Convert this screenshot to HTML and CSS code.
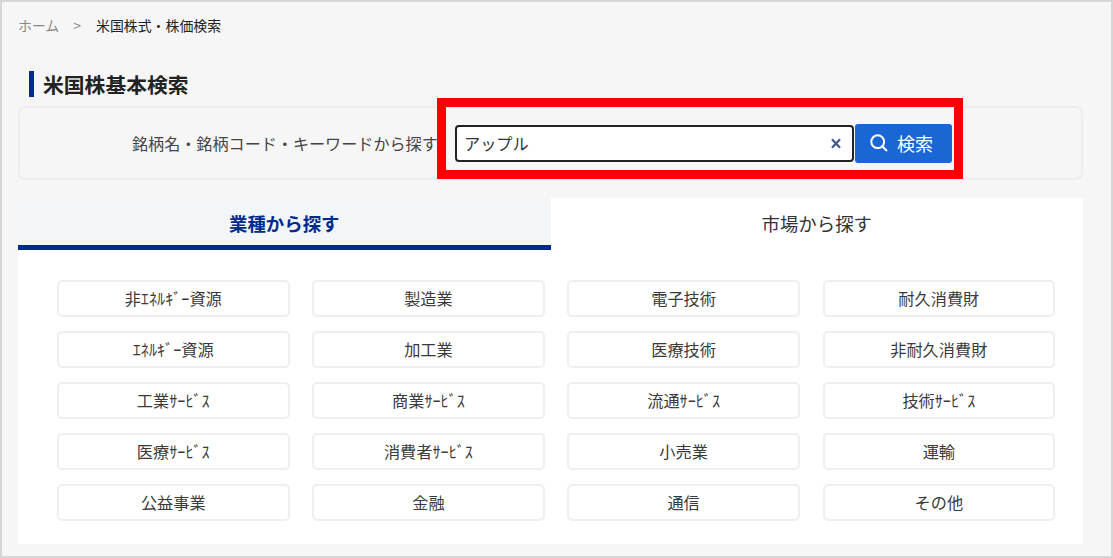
FILE: index.html
```html
<!DOCTYPE html>
<html lang="ja">
<head>
<meta charset="utf-8">
<title>米国株基本検索</title>
<link rel="stylesheet" href="styles.css">
</head>
<body>
<div class="frame">
  <nav class="crumbs"><span class="home">ホーム</span><span class="sep">&gt;</span><span class="current">米国株式・株価検索</span></nav>
  <h1 class="title">米国株基本検索</h1>
  <section class="search">
    <span class="search-label">銘柄名・銘柄コード・キーワードから探す</span>
    <div class="input">
      <span class="input-text">アップル</span>
      <svg class="clear" viewBox="0 0 10 11" width="10" height="11"><path d="M1 1.2 L9 9.8 M9 1.2 L1 9.8" stroke="#43598f" stroke-width="2.3" fill="none"/></svg>
    </div>
    <div class="btn-search">
      <svg viewBox="0 0 18 18" width="18" height="18"><circle cx="7.7" cy="7.7" r="6.4" stroke="#fff" stroke-width="2" fill="none"/><path d="M12.2 12.2 L17 17" stroke="#fff" stroke-width="2" fill="none"/></svg>
      <span>検索</span>
    </div>
    <div class="highlight"></div>
  </section>
  <section class="card">
    <div class="tabs">
      <div class="tab active">業種から探す</div>
      <div class="tab">市場から探す</div>
    </div>
    <div class="grid">
      <div class="item">非ｴﾈﾙｷﾞｰ資源</div>
      <div class="item">製造業</div>
      <div class="item">電子技術</div>
      <div class="item">耐久消費財</div>
      <div class="item">ｴﾈﾙｷﾞｰ資源</div>
      <div class="item">加工業</div>
      <div class="item">医療技術</div>
      <div class="item">非耐久消費財</div>
      <div class="item">工業ｻｰﾋﾞｽ</div>
      <div class="item">商業ｻｰﾋﾞｽ</div>
      <div class="item">流通ｻｰﾋﾞｽ</div>
      <div class="item">技術ｻｰﾋﾞｽ</div>
      <div class="item">医療ｻｰﾋﾞｽ</div>
      <div class="item">消費者ｻｰﾋﾞｽ</div>
      <div class="item">小売業</div>
      <div class="item">運輸</div>
      <div class="item">公益事業</div>
      <div class="item">金融</div>
      <div class="item">通信</div>
      <div class="item">その他</div>
    </div>
  </section>
</div>
</body>
</html>
```
FILE: styles.css
```css
* { box-sizing: border-box; }
html, body { margin: 0; padding: 0; }
body {
  width: 1113px;
  height: 558px;
  overflow: hidden;
  font-family: "Noto Sans CJK JP", "Noto Sans", sans-serif;
  color: #333;
}
.frame {
  width: 1113px;
  height: 558px;
  background: #f6f6f6;
  border: 2px solid #d6d6d6;
  padding: 0 28px 0 16px;
}
.crumbs {
  display: flex;
  align-items: center;
  height: 20px;
  margin-top: 13px;
  font-size: 13.9px;
}
.home { color: #888; }
.sep { color: #888; margin: 0 15px 0 14px; font-size: 14px; }
.current { color: #222; font-weight: 400; }
.title {
  margin: 36px 0 0 11px;
  height: 26px;
  border-left: 5px solid #002a8d;
  padding-left: 9px;
  font-size: 20.8px;
  line-height: 27px;
  font-weight: 700;
  color: #222;
}
.search {
  position: relative;
  display: flex;
  align-items: center;
  height: 74px;
  margin-top: 9px;
  padding-left: 112px;
  border: 2px solid #ededed;
  border-radius: 7px;
  background: #f6f6f6;
}
.search-label {
  font-size: 16.1px;
  color: #444;
  width: 323px;
  white-space: nowrap;
}
.input {
  display: flex;
  align-items: center;
  justify-content: space-between;
  width: 399px;
  height: 37px;
  padding: 0 11px 0 7px;
  background: #fff;
  border: 2px solid #222;
  border-radius: 4px;
}
.input-text { font-size: 16.2px; color: #333; }
.btn-search {
  display: flex;
  align-items: center;
  justify-content: center;
  gap: 9px;
  width: 97px;
  height: 39px;
  margin-left: 1px;
  padding-right: 4px;
  background: #1a66d4;
  border-radius: 3px;
  color: #fff;
  font-size: 18px;
}
.highlight {
  position: absolute;
  left: 417px;
  top: -10px;
  width: 526px;
  height: 81px;
  border: 9px solid #ff0000;
}
.card {
  height: 346px;
  margin-top: 18px;
  background: #fff;
}
.tabs { display: flex; height: 52px; }
.tab {
  flex: 1;
  display: flex;
  align-items: center;
  justify-content: center;
  padding-bottom: 3px;
  font-size: 18.4px;
  color: #333;
}
.tab.active {
  padding: 2px 0 0;
  background: #f2f6f9;
  border-bottom: 5px solid #002a8d;
  color: #002a8d;
  font-weight: 700;
}
.grid {
  display: grid;
  grid-template-columns: repeat(4, 232.5px);
  grid-auto-rows: 37px;
  column-gap: 22.7px;
  row-gap: 14px;
  padding: 30px 0 0 39px;
}
.item {
  display: flex;
  align-items: center;
  justify-content: center;
  padding-bottom: 2px;
  background: #fff;
  border: 2px solid #efefef;
  border-radius: 5px;
  font-size: 16.2px;
  color: #3a3a3a;
  white-space: nowrap;
}
```
